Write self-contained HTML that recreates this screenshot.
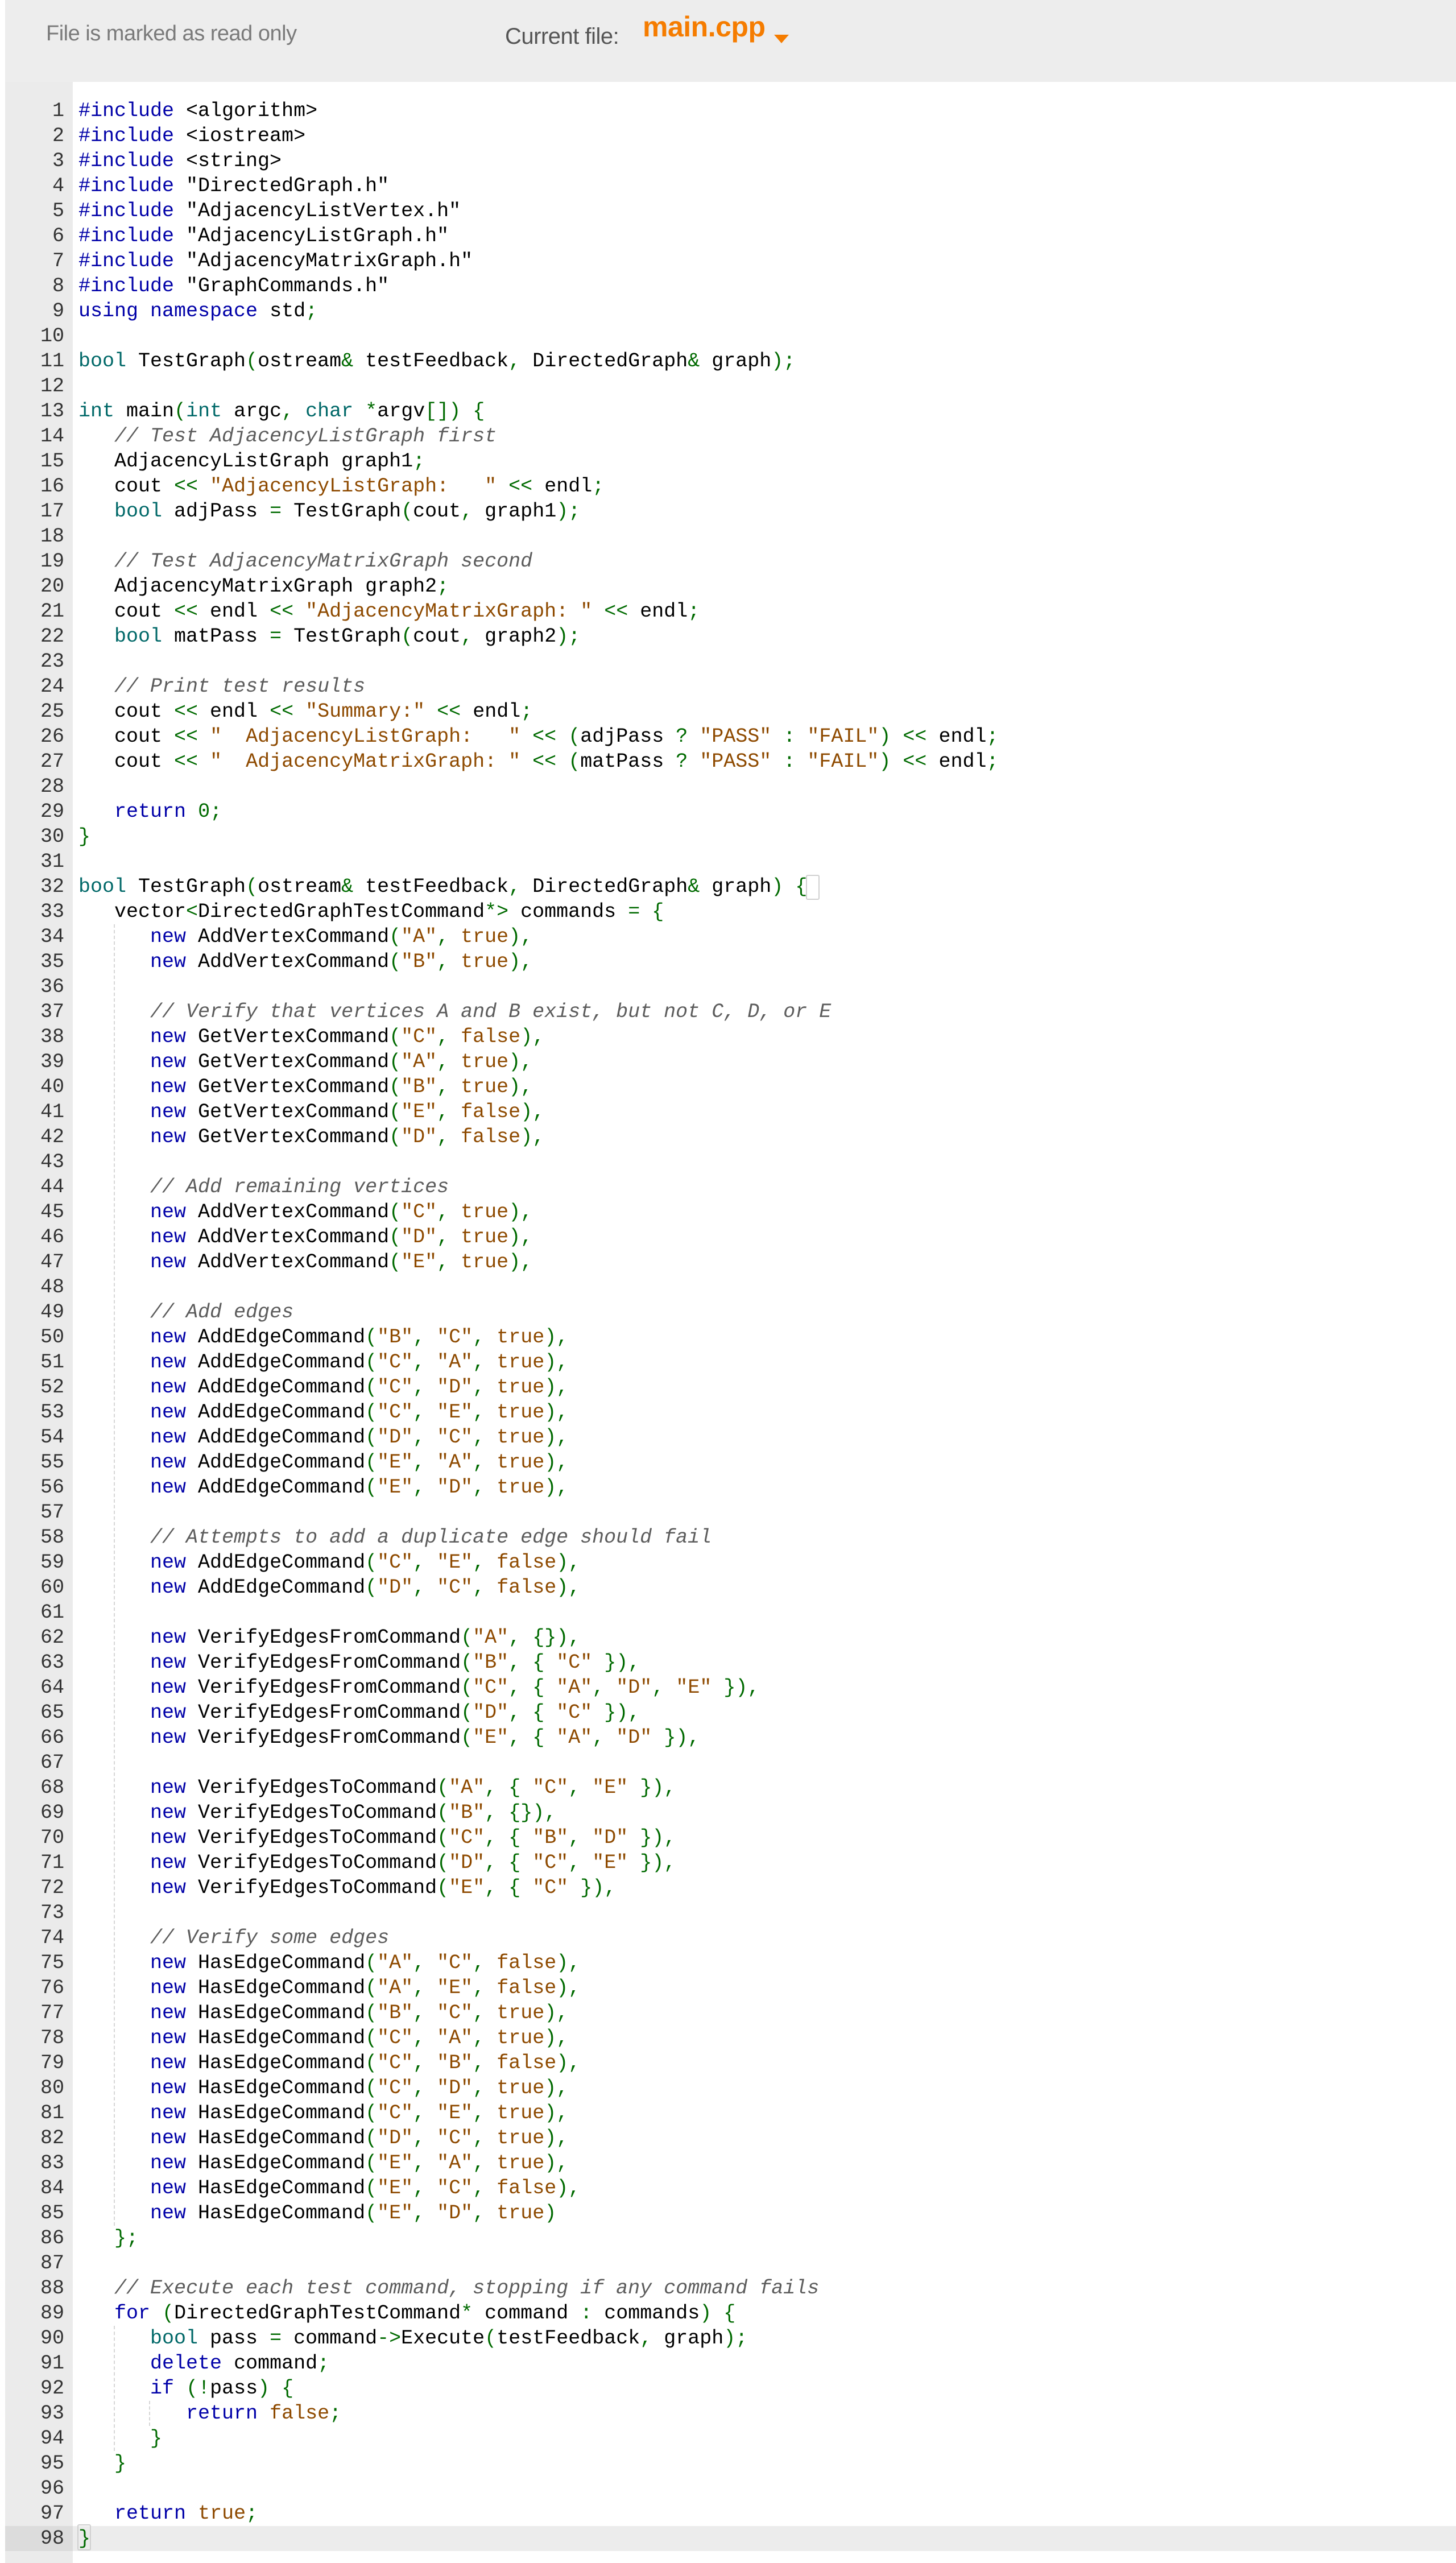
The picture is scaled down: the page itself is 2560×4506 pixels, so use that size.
<!DOCTYPE html>
<html><head><meta charset="utf-8">
<style>
html,body{margin:0;padding:0;background:#fff;}
body{width:2560px;height:4506px;position:relative;overflow:hidden;}
#top{position:absolute;left:9px;top:0;width:2551px;height:144px;background:#ededed;font-family:"Liberation Sans",sans-serif;}
#ro{position:absolute;left:72px;top:38px;font-size:38px;color:#7a7a7a;letter-spacing:-0.5px;}
#cf{position:absolute;left:879px;top:42px;font-size:40px;color:#555;letter-spacing:-0.5px;}
#fn{position:absolute;left:1121px;top:18px;font-size:50px;color:#f57c00;font-weight:bold;letter-spacing:-0.5px;}
#arr{position:absolute;left:1343px;top:61px;width:0;height:0;border-left:13px solid transparent;border-right:13px solid transparent;border-top:15px solid #f57c00;}
#gut{position:absolute;left:9px;top:144px;width:119px;height:4362px;background:#ebebeb;}
#hl{position:absolute;left:9px;top:4441px;width:2551px;height:44px;background:#ececec;}
#hlg{position:absolute;left:9px;top:4441px;width:119px;height:44px;background:#dcdcdc;}
pre{margin:0;font-family:"Liberation Mono",monospace;font-size:35px;line-height:44px;position:absolute;top:173px;}
#nums{left:9px;width:104px;text-align:right;color:#333;}
#code{left:138px;color:#000;}
k{color:#0000a8;} t{color:#006868;} v{color:#8e4a00;} g{color:#006a00;} c{color:#5c5c5c;font-style:italic;}
.guide{position:absolute;width:0;border-left:2px dashed #d6d6d6;}
.bm{position:absolute;border:2px solid #d0d0d0;border-radius:3px;}
</style></head><body>
<div id="top"><div id="ro">File is marked as read only</div><div id="cf">Current file:</div><div id="fn">main.cpp</div><div id="arr" style="left:1352px"></div></div>
<div id="gut"></div>
<div id="hl"></div><div id="hlg"></div>
<div class="guide" style="left:200px;top:1625px;height:2288px;"></div>
<div class="guide" style="left:200px;top:4089px;height:220px;"></div>
<div class="guide" style="left:262px;top:4221px;height:44px;"></div>
<div class="bm" style="left:1417px;top:1538px;width:20px;height:40px;"></div>
<div class="bm" style="left:136px;top:4438px;width:20px;height:42px;"></div>
<pre id="nums">1
2
3
4
5
6
7
8
9
10
11
12
13
14
15
16
17
18
19
20
21
22
23
24
25
26
27
28
29
30
31
32
33
34
35
36
37
38
39
40
41
42
43
44
45
46
47
48
49
50
51
52
53
54
55
56
57
58
59
60
61
62
63
64
65
66
67
68
69
70
71
72
73
74
75
76
77
78
79
80
81
82
83
84
85
86
87
88
89
90
91
92
93
94
95
96
97
98</pre>
<pre id="code"><k>#include</k> &lt;algorithm&gt;
<k>#include</k> &lt;iostream&gt;
<k>#include</k> &lt;string&gt;
<k>#include</k> "DirectedGraph.h"
<k>#include</k> "AdjacencyListVertex.h"
<k>#include</k> "AdjacencyListGraph.h"
<k>#include</k> "AdjacencyMatrixGraph.h"
<k>#include</k> "GraphCommands.h"
<k>using namespace</k> std<g>;</g>

<t>bool</t> TestGraph<g>(</g>ostream<g>&amp;</g> testFeedback<g>,</g> DirectedGraph<g>&amp;</g> graph<g>);</g>

<t>int</t> main<g>(</g><t>int</t> argc<g>,</g> <t>char</t> <g>*</g>argv<g>[])</g> <g>{</g>
   <c>// Test AdjacencyListGraph first</c>
   AdjacencyListGraph graph1<g>;</g>
   cout <g>&lt;&lt;</g> <v>"AdjacencyListGraph:   "</v> <g>&lt;&lt;</g> endl<g>;</g>
   <t>bool</t> adjPass <g>=</g> TestGraph<g>(</g>cout<g>,</g> graph1<g>);</g>

   <c>// Test AdjacencyMatrixGraph second</c>
   AdjacencyMatrixGraph graph2<g>;</g>
   cout <g>&lt;&lt;</g> endl <g>&lt;&lt;</g> <v>"AdjacencyMatrixGraph: "</v> <g>&lt;&lt;</g> endl<g>;</g>
   <t>bool</t> matPass <g>=</g> TestGraph<g>(</g>cout<g>,</g> graph2<g>);</g>

   <c>// Print test results</c>
   cout <g>&lt;&lt;</g> endl <g>&lt;&lt;</g> <v>"Summary:"</v> <g>&lt;&lt;</g> endl<g>;</g>
   cout <g>&lt;&lt;</g> <v>"  AdjacencyListGraph:   "</v> <g>&lt;&lt;</g> <g>(</g>adjPass <g>?</g> <v>"PASS"</v> <g>:</g> <v>"FAIL"</v><g>)</g> <g>&lt;&lt;</g> endl<g>;</g>
   cout <g>&lt;&lt;</g> <v>"  AdjacencyMatrixGraph: "</v> <g>&lt;&lt;</g> <g>(</g>matPass <g>?</g> <v>"PASS"</v> <g>:</g> <v>"FAIL"</v><g>)</g> <g>&lt;&lt;</g> endl<g>;</g>

   <k>return</k> <g>0;</g>
<g>}</g>

<t>bool</t> TestGraph<g>(</g>ostream<g>&amp;</g> testFeedback<g>,</g> DirectedGraph<g>&amp;</g> graph<g>)</g> <g>{</g>
   vector<g>&lt;</g>DirectedGraphTestCommand<g>*&gt;</g> commands <g>=</g> <g>{</g>
      <k>new</k> AddVertexCommand<g>(</g><v>"A"</v><g>,</g> <v>true</v><g>),</g>
      <k>new</k> AddVertexCommand<g>(</g><v>"B"</v><g>,</g> <v>true</v><g>),</g>

      <c>// Verify that vertices A and B exist, but not C, D, or E</c>
      <k>new</k> GetVertexCommand<g>(</g><v>"C"</v><g>,</g> <v>false</v><g>),</g>
      <k>new</k> GetVertexCommand<g>(</g><v>"A"</v><g>,</g> <v>true</v><g>),</g>
      <k>new</k> GetVertexCommand<g>(</g><v>"B"</v><g>,</g> <v>true</v><g>),</g>
      <k>new</k> GetVertexCommand<g>(</g><v>"E"</v><g>,</g> <v>false</v><g>),</g>
      <k>new</k> GetVertexCommand<g>(</g><v>"D"</v><g>,</g> <v>false</v><g>),</g>

      <c>// Add remaining vertices</c>
      <k>new</k> AddVertexCommand<g>(</g><v>"C"</v><g>,</g> <v>true</v><g>),</g>
      <k>new</k> AddVertexCommand<g>(</g><v>"D"</v><g>,</g> <v>true</v><g>),</g>
      <k>new</k> AddVertexCommand<g>(</g><v>"E"</v><g>,</g> <v>true</v><g>),</g>

      <c>// Add edges</c>
      <k>new</k> AddEdgeCommand<g>(</g><v>"B"</v><g>,</g> <v>"C"</v><g>,</g> <v>true</v><g>),</g>
      <k>new</k> AddEdgeCommand<g>(</g><v>"C"</v><g>,</g> <v>"A"</v><g>,</g> <v>true</v><g>),</g>
      <k>new</k> AddEdgeCommand<g>(</g><v>"C"</v><g>,</g> <v>"D"</v><g>,</g> <v>true</v><g>),</g>
      <k>new</k> AddEdgeCommand<g>(</g><v>"C"</v><g>,</g> <v>"E"</v><g>,</g> <v>true</v><g>),</g>
      <k>new</k> AddEdgeCommand<g>(</g><v>"D"</v><g>,</g> <v>"C"</v><g>,</g> <v>true</v><g>),</g>
      <k>new</k> AddEdgeCommand<g>(</g><v>"E"</v><g>,</g> <v>"A"</v><g>,</g> <v>true</v><g>),</g>
      <k>new</k> AddEdgeCommand<g>(</g><v>"E"</v><g>,</g> <v>"D"</v><g>,</g> <v>true</v><g>),</g>

      <c>// Attempts to add a duplicate edge should fail</c>
      <k>new</k> AddEdgeCommand<g>(</g><v>"C"</v><g>,</g> <v>"E"</v><g>,</g> <v>false</v><g>),</g>
      <k>new</k> AddEdgeCommand<g>(</g><v>"D"</v><g>,</g> <v>"C"</v><g>,</g> <v>false</v><g>),</g>

      <k>new</k> VerifyEdgesFromCommand<g>(</g><v>"A"</v><g>,</g> <g>{}),</g>
      <k>new</k> VerifyEdgesFromCommand<g>(</g><v>"B"</v><g>,</g> <g>{</g> <v>"C"</v> <g>}),</g>
      <k>new</k> VerifyEdgesFromCommand<g>(</g><v>"C"</v><g>,</g> <g>{</g> <v>"A"</v><g>,</g> <v>"D"</v><g>,</g> <v>"E"</v> <g>}),</g>
      <k>new</k> VerifyEdgesFromCommand<g>(</g><v>"D"</v><g>,</g> <g>{</g> <v>"C"</v> <g>}),</g>
      <k>new</k> VerifyEdgesFromCommand<g>(</g><v>"E"</v><g>,</g> <g>{</g> <v>"A"</v><g>,</g> <v>"D"</v> <g>}),</g>

      <k>new</k> VerifyEdgesToCommand<g>(</g><v>"A"</v><g>,</g> <g>{</g> <v>"C"</v><g>,</g> <v>"E"</v> <g>}),</g>
      <k>new</k> VerifyEdgesToCommand<g>(</g><v>"B"</v><g>,</g> <g>{}),</g>
      <k>new</k> VerifyEdgesToCommand<g>(</g><v>"C"</v><g>,</g> <g>{</g> <v>"B"</v><g>,</g> <v>"D"</v> <g>}),</g>
      <k>new</k> VerifyEdgesToCommand<g>(</g><v>"D"</v><g>,</g> <g>{</g> <v>"C"</v><g>,</g> <v>"E"</v> <g>}),</g>
      <k>new</k> VerifyEdgesToCommand<g>(</g><v>"E"</v><g>,</g> <g>{</g> <v>"C"</v> <g>}),</g>

      <c>// Verify some edges</c>
      <k>new</k> HasEdgeCommand<g>(</g><v>"A"</v><g>,</g> <v>"C"</v><g>,</g> <v>false</v><g>),</g>
      <k>new</k> HasEdgeCommand<g>(</g><v>"A"</v><g>,</g> <v>"E"</v><g>,</g> <v>false</v><g>),</g>
      <k>new</k> HasEdgeCommand<g>(</g><v>"B"</v><g>,</g> <v>"C"</v><g>,</g> <v>true</v><g>),</g>
      <k>new</k> HasEdgeCommand<g>(</g><v>"C"</v><g>,</g> <v>"A"</v><g>,</g> <v>true</v><g>),</g>
      <k>new</k> HasEdgeCommand<g>(</g><v>"C"</v><g>,</g> <v>"B"</v><g>,</g> <v>false</v><g>),</g>
      <k>new</k> HasEdgeCommand<g>(</g><v>"C"</v><g>,</g> <v>"D"</v><g>,</g> <v>true</v><g>),</g>
      <k>new</k> HasEdgeCommand<g>(</g><v>"C"</v><g>,</g> <v>"E"</v><g>,</g> <v>true</v><g>),</g>
      <k>new</k> HasEdgeCommand<g>(</g><v>"D"</v><g>,</g> <v>"C"</v><g>,</g> <v>true</v><g>),</g>
      <k>new</k> HasEdgeCommand<g>(</g><v>"E"</v><g>,</g> <v>"A"</v><g>,</g> <v>true</v><g>),</g>
      <k>new</k> HasEdgeCommand<g>(</g><v>"E"</v><g>,</g> <v>"C"</v><g>,</g> <v>false</v><g>),</g>
      <k>new</k> HasEdgeCommand<g>(</g><v>"E"</v><g>,</g> <v>"D"</v><g>,</g> <v>true</v><g>)</g>
   <g>};</g>

   <c>// Execute each test command, stopping if any command fails</c>
   <k>for</k> <g>(</g>DirectedGraphTestCommand<g>*</g> command <g>:</g> commands<g>)</g> <g>{</g>
      <t>bool</t> pass <g>=</g> command<g>-&gt;</g>Execute<g>(</g>testFeedback<g>,</g> graph<g>);</g>
      <k>delete</k> command<g>;</g>
      <k>if</k> <g>(!</g>pass<g>)</g> <g>{</g>
         <k>return</k> <v>false</v><g>;</g>
      <g>}</g>
   <g>}</g>

   <k>return</k> <v>true</v><g>;</g>
<g>}</g></pre>
</body></html>
